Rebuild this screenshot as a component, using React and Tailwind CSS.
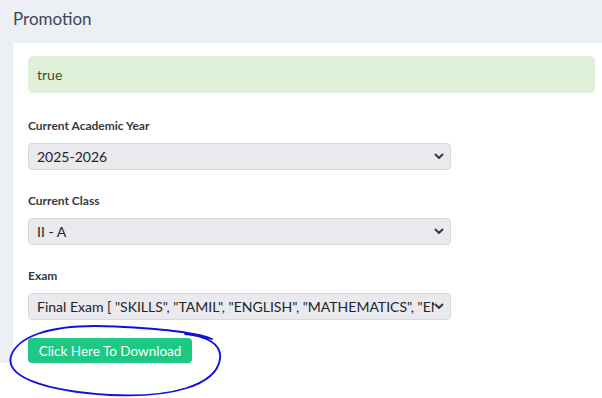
import React from "react";

function Chevron() {
  return (
    <svg width="10" height="7" viewBox="0 0 10 7" className="shrink-0">
      <path d="M1.5 1.5 L5 5 L8.5 1.5" fill="none" stroke="#343a40" strokeWidth="2" strokeLinecap="round" strokeLinejoin="round" />
    </svg>
  );
}

function Field({ label, value }) {
  return (
    <div className="flex flex-col">
      <div className="h-[18px] leading-[18px] text-[12px] font-bold text-[#343a40]">{label}</div>
      <div className="mt-[8px] w-[423px] h-[27px] flex items-center rounded-[4px] border border-[#d5d9e0] bg-[#e9e9ee] pl-[8px] pr-[6px]">
        <div className="flex-1 overflow-hidden whitespace-nowrap text-[14px] text-[#212529] leading-[20px]">{value}</div>
        <Chevron />
      </div>
    </div>
  );
}

export default function App() {
  return (
    <div
      className="relative w-[602px] h-[398px] bg-white overflow-hidden"
      style={{ fontFamily: "Lato, 'Open Sans', sans-serif" }}
    >
      <div className="h-[363px] bg-[#ecf0f5] flex flex-col">
        <div className="h-[43px] px-[13px] pt-[8px] text-[17px] leading-[22px] text-[#3b4856]">Promotion</div>
        <div className="flex-1 ml-[13px] bg-white pl-[15px] pr-[7px] pt-[13px]">
          <div className="h-[37px] rounded-[5px] bg-[#dff0d8] flex items-center px-[9px] text-[14px] text-[#3d5229]">
            true
          </div>
          <div className="mt-[24px] flex flex-col gap-[22px]">
            <Field label="Current Academic Year" value="2025-2026" />
            <Field label="Current Class" value="II - A" />
            <Field
              label="Exam"
              value={'Final Exam [ "SKILLS", "TAMIL", "ENGLISH", "MATHEMATICS", "ENVIRONMENTAL STUDIES" ]'}
            />
          </div>
          <button className="mt-[18px] h-[25px] w-[164px] rounded-[4px] bg-[#1cc883] text-white text-[13.5px] leading-[18px] flex items-center justify-center">
            Click Here To Download
          </button>
        </div>
      </div>
      <svg className="absolute left-0 top-0 pointer-events-none" width="602" height="398" viewBox="0 0 602 398">
        <path
          d="M212 339 C195 332, 150 327, 95 326 C50 326, 18 336, 11 356 C5 377, 45 391, 110 395 C170 398, 216 386, 220 359 C222 343, 205 336, 185 334"
          fill="none"
          stroke="#1010dd"
          strokeWidth="1.8"
          strokeLinecap="round"
        />
      </svg>
    </div>
  );
}
